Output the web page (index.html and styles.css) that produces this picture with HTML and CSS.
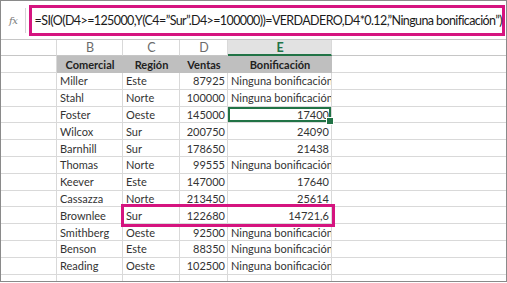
FILE: index.html
```html
<!DOCTYPE html>
<html lang="es">
<head>
<meta charset="utf-8">
<link rel="stylesheet" href="styles.css">
</head>
<body>
<div class="frame">
  <div class="fbar">
    <span class="fx">fx</span>
    <div class="fbox">
      <div class="finput">=SI(O(D4&gt;=125000,Y(C4=”Sur”.D4&gt;=100000))=VERDADERO,D4*0.12,”Ninguna bonificación”)</div>
    </div>
  </div>
  <div class="sheet">
    <div class="row letters"><div class="c"></div><div class="c">B</div><div class="c">C</div><div class="c">D</div><div class="c sel">E</div><div class="c"></div></div>
    <div class="row head"><div class="c"></div><div class="c th">Comercial</div><div class="c th">Región</div><div class="c th">Ventas</div><div class="c th">Bonificación</div><div class="c"></div></div>
    <div class="row"><div class="c"></div><div class="c">Miller</div><div class="c">Este</div><div class="c n">87925</div><div class="c">Ninguna bonificación</div><div class="c"></div></div>
    <div class="row"><div class="c"></div><div class="c">Stahl</div><div class="c">Norte</div><div class="c n">100000</div><div class="c">Ninguna bonificación</div><div class="c"></div></div>
    <div class="row"><div class="c"></div><div class="c">Foster</div><div class="c">Oeste</div><div class="c n">145000</div><div class="c n active">17400</div><div class="c"></div></div>
    <div class="row"><div class="c"></div><div class="c">Wilcox</div><div class="c">Sur</div><div class="c n">200750</div><div class="c n">24090</div><div class="c"></div></div>
    <div class="row"><div class="c"></div><div class="c">Barnhill</div><div class="c">Sur</div><div class="c n">178650</div><div class="c n">21438</div><div class="c"></div></div>
    <div class="row"><div class="c"></div><div class="c">Thomas</div><div class="c">Norte</div><div class="c n">99555</div><div class="c">Ninguna bonificación</div><div class="c"></div></div>
    <div class="row"><div class="c"></div><div class="c">Keever</div><div class="c">Este</div><div class="c n">147000</div><div class="c n">17640</div><div class="c"></div></div>
    <div class="row"><div class="c"></div><div class="c">Cassazza</div><div class="c">Norte</div><div class="c n">213450</div><div class="c n">25614</div><div class="c"></div></div>
    <div class="row marked"><div class="c"></div><div class="c">Brownlee</div><div class="c">Sur</div><div class="c n">122680</div><div class="c n">14721,6</div><div class="c"></div><div class="highlight"></div></div>
    <div class="row"><div class="c"></div><div class="c">Smithberg</div><div class="c">Oeste</div><div class="c n">92500</div><div class="c">Ninguna bonificación</div><div class="c"></div></div>
    <div class="row"><div class="c"></div><div class="c">Benson</div><div class="c">Este</div><div class="c n">88350</div><div class="c">Ninguna bonificación</div><div class="c"></div></div>
    <div class="row"><div class="c"></div><div class="c">Reading</div><div class="c">Oeste</div><div class="c n">102500</div><div class="c">Ninguna bonificación</div><div class="c"></div></div>
    <div class="row last"><div class="c"></div><div class="c"></div><div class="c"></div><div class="c"></div><div class="c"></div><div class="c"></div></div>
  </div>
</div>
</body>
</html>
```
FILE: styles.css
```css
* { box-sizing: border-box; }
html, body { margin: 0; padding: 0; background: #fff; }
body { font-family: Lato, "Open Sans", sans-serif; }

.frame {
  width: 507px;
  height: 282px;
  border: 1px solid #8a8a8a;
  overflow: hidden;
  display: flex;
  flex-direction: column;
}

.fbar {
  height: 39px;
  flex: none;
  display: flex;
  align-items: center;
  border-bottom: 1px solid #c6c6c6;
  padding-left: 8px;
}
.fx {
  font-family: "DejaVu Serif", serif;
  font-style: italic;
  font-size: 10px;
  color: #7a7a7a;
  width: 22px;
  letter-spacing: -0.5px;
}
.fbox {
  flex: 1;
  height: 25px;
  border-left: 1px solid #d4d4d4;
  display: flex;
  align-items: center;
  padding-left: 3px;
  margin-right: 1px;
}
.finput {
  flex: 1;
  height: 31px;
  border: 3px solid #d5147f;
  display: flex;
  align-items: center;
  padding-left: 3px;
  font-size: 12.5px;
  color: #1a1a1a;
  white-space: nowrap;
  letter-spacing: -0.6px;
}

.sheet {
  display: flex;
  flex-direction: column;
  font-size: 11px;
  color: #333;
}
.row {
  display: grid;
  grid-template-columns: 56px 66px 57px 48px 104px 1fr;
  height: 16.8px;
}
.row.letters { height: 16px; }
.row.head { height: 17px; }
.row.last { height: 20px; }
.c {
  border-right: 1px solid #d9d9d9;
  border-bottom: 1px solid #d9d9d9;
  padding: 0 2px 0 3px;
  display: flex;
  align-items: center;
  white-space: nowrap;
  overflow: hidden;
}
.c:nth-child(6) { border-right: none; }
.n { justify-content: flex-end; }

.letters .c {
  justify-content: center;
  color: #6b6b6b;
  font-size: 12.5px;
  border-bottom-color: #c6c6c6;
}
.letters .c.sel {
  background: #e2e2e2;
  color: #217346;
  font-weight: 700;
  border-bottom: 2px solid #217346;
}
.th {
  background: #bfbfbf;
  border-color: #bfbfbf;
  justify-content: center;
  font-weight: 700;
  color: #222;
}
.active {
  position: relative;
  box-shadow: inset 0 0 0 2px #217346;
  overflow: visible;
}
.active::after {
  content: "";
  position: absolute;
  right: -3px;
  bottom: -3px;
  width: 6px;
  height: 6px;
  background: #217346;
  border: 1px solid #fff;
}

.marked { position: relative; }
.highlight {
  position: absolute;
  left: 120px;
  width: 214px;
  top: -3px;
  bottom: -3px;
  border: 3px solid #d5147f;
  pointer-events: none;
}
```
